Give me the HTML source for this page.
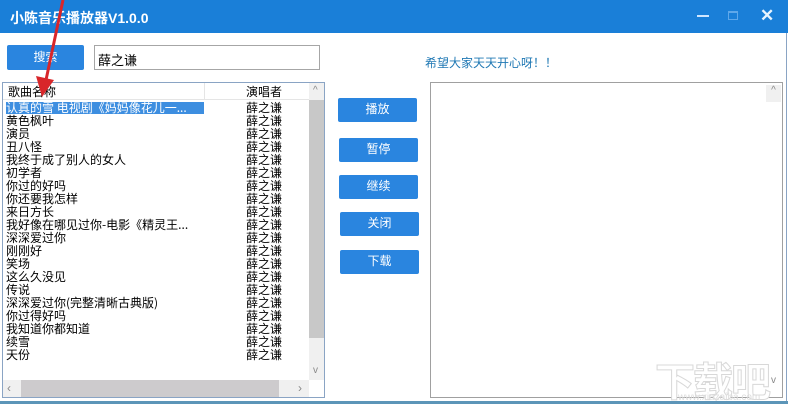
<!DOCTYPE html>
<html><head><meta charset="utf-8"><style>
*{margin:0;padding:0;box-sizing:border-box}
body{width:788px;height:404px;overflow:hidden;background:#fff;position:relative;font-family:"Liberation Sans","Noto Sans CJK SC",sans-serif;font-size:12px;color:#000}
.a{position:absolute}
.title{left:0;top:0;width:788px;height:33px;background:#1a7fd8}
.title span{position:absolute;left:10px;top:8px;color:#fff;font-weight:bold;font-size:14px}
.btn{position:absolute;background:#2a85df;color:#fff;border-radius:2px;text-align:center;font-size:12px;line-height:23px}
.list{left:2px;top:82px;width:323px;height:316px;border:1px solid #8aa4c4;background:#fff;overflow:hidden}
.row{position:absolute;left:3px;height:13px;line-height:13px;white-space:nowrap;font-family:"WenQuanYi Zen Hei","Noto Sans CJK SC",sans-serif;font-size:12px}
.sing{position:absolute;left:243px;height:13px;line-height:13px;font-family:"WenQuanYi Zen Hei","Noto Sans CJK SC",sans-serif;font-size:12px}
</style></head><body>
<div class="a title"><span>小陈音乐播放器V1.0.0</span>
<div class="a" style="left:697px;top:15px;width:12px;height:2px;background:#cfe6ff"></div>
<div class="a" style="left:728px;top:11px;width:10px;height:9px;border:1px solid #5fa8ea;border-top-width:2px"></div>
<div class="a" style="left:760px;top:6px;color:#e8f4ff;font-size:17px;font-weight:bold">✕</div>
</div>
<div class="a" style="left:786px;top:33px;width:1px;height:371px;background:#8aa4c4"></div>
<div class="a" style="left:0;top:401px;width:788px;height:3px;background:#5c95b8"></div>
<div class="btn" style="left:7px;top:45px;width:77px;height:25px;line-height:25px">搜索</div>
<div class="a" style="left:94px;top:45px;width:226px;height:25px;border:1px solid #a6a6a6;padding:4px 3px;font-size:13px">薛之谦</div>
<div class="a" style="left:425px;top:54px;color:#1f78b4;font-size:12px">希望大家天天开心呀！！</div>
<div class="a list">
<div class="a" style="left:0;top:0;width:306px;height:17px;border-bottom:1px solid #e5e5e5"></div>
<div class="a" style="left:201px;top:0;width:1px;height:17px;background:#e5e5e5"></div>
<div class="row" style="left:5px;top:2px">歌曲名称</div>
<div class="sing" style="top:2px">演唱者</div>
<div class="a" style="left:306px;top:0;width:16px;height:297px;background:#f0f0f0"></div>
<div class="a" style="left:306px;top:17px;width:16px;height:238px;background:#c8c8c8"></div>
<div class="a" style="left:310px;top:2px;color:#888;font-size:10px">^</div>
<div class="a" style="left:310px;top:282px;color:#888;font-size:10px">v</div>
<div class="a" style="left:0;top:297px;width:306px;height:17px;background:#f0f0f0"></div>
<div class="a" style="left:18px;top:297px;width:258px;height:17px;background:#cdcbcd"></div>
<div class="a" style="left:4px;top:298px;color:#888;font-size:12px">‹</div>
<div class="a" style="left:295px;top:298px;color:#888;font-size:12px">›</div>
<div class="a" style="left:3px;top:19px;width:198px;height:12px;background:#3d8ee0"></div>
<div class="row" style="top:18px;color:#fff">认真的雪 电视剧《妈妈像花儿一...</div>
<div class="row" style="top:31px">黄色枫叶</div>
<div class="row" style="top:44px">演员</div>
<div class="row" style="top:57px">丑八怪</div>
<div class="row" style="top:70px">我终于成了别人的女人</div>
<div class="row" style="top:83px">初学者</div>
<div class="row" style="top:96px">你过的好吗</div>
<div class="row" style="top:109px">你还要我怎样</div>
<div class="row" style="top:122px">来日方长</div>
<div class="row" style="top:135px">我好像在哪见过你-电影《精灵王...</div>
<div class="row" style="top:148px">深深爱过你</div>
<div class="row" style="top:161px">刚刚好</div>
<div class="row" style="top:174px">笑场</div>
<div class="row" style="top:187px">这么久没见</div>
<div class="row" style="top:200px">传说</div>
<div class="row" style="top:213px">深深爱过你(完整清晰古典版)</div>
<div class="row" style="top:226px">你过得好吗</div>
<div class="row" style="top:239px">我知道你都知道</div>
<div class="row" style="top:252px">续雪</div>
<div class="row" style="top:265px">天份</div>
<div class="sing" style="top:18px">薛之谦</div><div class="sing" style="top:31px">薛之谦</div><div class="sing" style="top:44px">薛之谦</div><div class="sing" style="top:57px">薛之谦</div><div class="sing" style="top:70px">薛之谦</div><div class="sing" style="top:83px">薛之谦</div><div class="sing" style="top:96px">薛之谦</div><div class="sing" style="top:109px">薛之谦</div><div class="sing" style="top:122px">薛之谦</div><div class="sing" style="top:135px">薛之谦</div><div class="sing" style="top:148px">薛之谦</div><div class="sing" style="top:161px">薛之谦</div><div class="sing" style="top:174px">薛之谦</div><div class="sing" style="top:187px">薛之谦</div><div class="sing" style="top:200px">薛之谦</div><div class="sing" style="top:213px">薛之谦</div><div class="sing" style="top:226px">薛之谦</div><div class="sing" style="top:239px">薛之谦</div><div class="sing" style="top:252px">薛之谦</div><div class="sing" style="top:265px">薛之谦</div>
</div>
<div class="btn" style="left:338px;top:98px;width:79px;height:24px">播放</div>
<div class="btn" style="left:339px;top:138px;width:79px;height:24px">暂停</div>
<div class="btn" style="left:339px;top:175px;width:79px;height:24px">继续</div>
<div class="btn" style="left:340px;top:212px;width:79px;height:24px">关闭</div>
<div class="btn" style="left:340px;top:250px;width:79px;height:24px">下载</div>
<div class="a" style="left:430px;top:82px;width:353px;height:316px;border:1px solid #a0a0a0;background:#fff">
<div class="a" style="left:335px;top:2px;width:15px;height:17px;background:#f0f0f0;color:#888;font-size:10px;text-align:center">^</div>
<div class="a" style="left:335px;top:292px;width:15px;height:17px;color:#888;font-size:10px;text-align:center">v</div>
</div>
<div class="a" style="left:655px;top:350px;color:#e2e2e2;font-size:40px;font-weight:bold;letter-spacing:-2px;-webkit-text-stroke:1px #d8d8d8;color:#fff">下载吧</div>
<div class="a" style="left:678px;top:392px;color:#ddd;font-size:10px">www.xiazaiba.com</div>
<svg class="a" style="left:0;top:0" width="120" height="110"><line x1="63" y1="0" x2="46" y2="80" stroke="#d8262a" stroke-width="3"/><polygon points="36,76 54,80 42,97" fill="#d8262a"/></svg>
</body></html>
